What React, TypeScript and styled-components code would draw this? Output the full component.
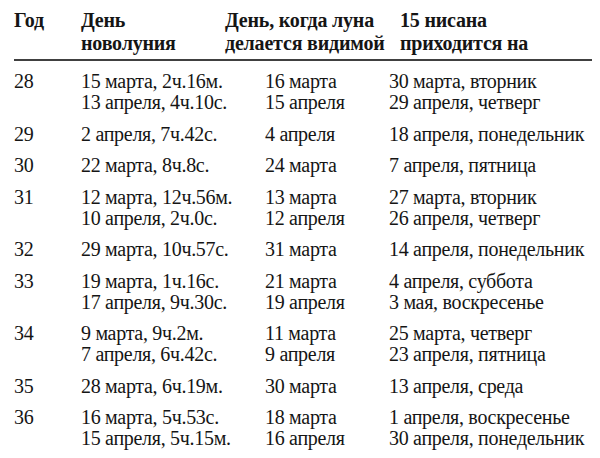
import React from "react";
import styled, { createGlobalStyle } from "styled-components";

const SERIF = `"Liberation Serif", serif`;

const Global = createGlobalStyle`
  html, body { margin: 0; padding: 0; background: #ffffff; }
`;

const Page = styled.div`
  width: 600px;
  box-sizing: border-box;
  padding: 9px 8px 0 14px;
  background: #ffffff;
  color: #151515;
  font-size: 20px;
`;

const HeaderRow = styled.div`
  display: grid;
  grid-template-columns: 67px 144px 175px 1fr;
  padding-bottom: 4px;
  border-bottom: 2px solid #404040;
`;

const HeaderCell = styled.div<{ $font: string }>`
  font-family: ${(p) => p.$font};
  font-weight: 700;
  letter-spacing: -0.2px;
  line-height: 23px;
  white-space: nowrap;
`;

const Body = styled.div`
  padding-top: 10px;
`;

const Row = styled.div`
  display: grid;
  grid-template-columns: 67px 184px 124px 1fr;
  padding-bottom: 10.5px;
`;

const Cell = styled.div`
  display: flex;
  flex-direction: column;
`;

const Text = styled.div<{ $font: string }>`
  font-family: ${(p) => p.$font};
  letter-spacing: -0.3px;
  line-height: 21px;
  white-space: nowrap;
`;

type Entry = { year: string; nov: string[]; vis: string[]; nisan: string[] };

const data: Entry[] = [
  { year: "28", nov: ["15 марта, 2ч.16м.", "13 апреля, 4ч.10с."], vis: ["16 марта", "15 апреля"], nisan: ["30 марта, вторник", "29 апреля, четверг"] },
  { year: "29", nov: ["2 апреля, 7ч.42с."], vis: ["4 апреля"], nisan: ["18 апреля, понедельник"] },
  { year: "30", nov: ["22 марта, 8ч.8с."], vis: ["24 марта"], nisan: ["7 апреля, пятница"] },
  { year: "31", nov: ["12 марта, 12ч.56м.", "10 апреля, 2ч.0с."], vis: ["13 марта", "12 апреля"], nisan: ["27 марта, вторник", "26 апреля, четверг"] },
  { year: "32", nov: ["29 марта, 10ч.57с."], vis: ["31 марта"], nisan: ["14 апреля, понедельник"] },
  { year: "33", nov: ["19 марта, 1ч.16с.", "17 апреля, 9ч.30с."], vis: ["21 марта", "19 апреля"], nisan: ["4 апреля, суббота", "3 мая, воскресенье"] },
  { year: "34", nov: ["9 марта, 9ч.2м.", "7 апреля, 6ч.42с."], vis: ["11 марта", "9 апреля"], nisan: ["25 марта, четверг", "23 апреля, пятница"] },
  { year: "35", nov: ["28 марта, 6ч.19м."], vis: ["30 марта"], nisan: ["13 апреля, среда"] },
  { year: "36", nov: ["16 марта, 5ч.53с.", "15 апреля, 5ч.15м."], vis: ["18 марта", "16 апреля"], nisan: ["1 апреля, воскресенье", "30 апреля, понедельник"] },
];

const Lines = ({ items }: { items: string[] }) => (
  <Cell>
    {items.map((t, i) => (
      <Text key={i} $font={SERIF}>
        {t}
      </Text>
    ))}
  </Cell>
);

const Head = ({ items }: { items: string[] }) => (
  <Cell>
    {items.map((t, i) => (
      <HeaderCell key={i} $font={SERIF}>
        {t}
      </HeaderCell>
    ))}
  </Cell>
);

export default function App() {
  return (
    <Page>
      <Global />
      <HeaderRow>
        <Head items={["Год"]} />
        <Head items={["День", "новолуния"]} />
        <Head items={["День, когда луна", "делается видимой"]} />
        <Head items={["15 нисана", "приходится на"]} />
      </HeaderRow>
      <Body>
        {data.map((r) => (
          <Row key={r.year}>
            <Lines items={[r.year]} />
            <Lines items={r.nov} />
            <Lines items={r.vis} />
            <Lines items={r.nisan} />
          </Row>
        ))}
      </Body>
    </Page>
  );
}
